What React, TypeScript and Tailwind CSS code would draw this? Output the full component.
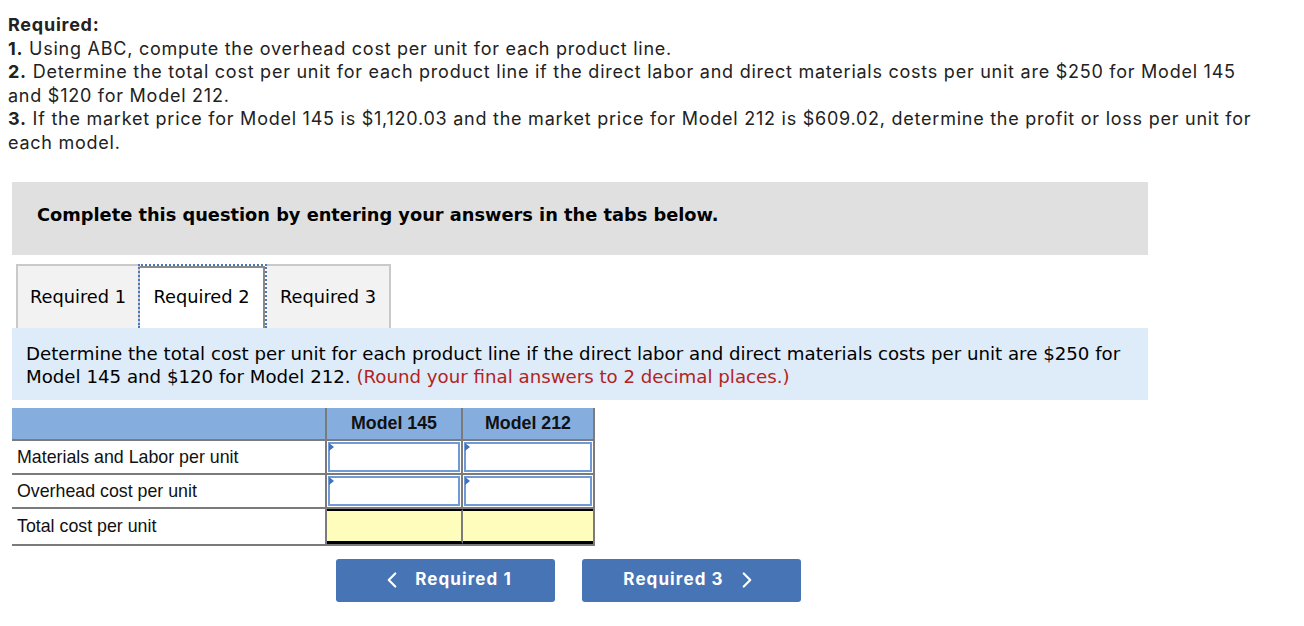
import { ChevronLeft, ChevronRight } from 'lucide-react'

const rows = [
  { label: 'Materials and Labor per unit', kind: 'input' },
  { label: 'Overhead cost per unit', kind: 'input' },
  { label: 'Total cost per unit', kind: 'total' },
]

function InputCell({ last }: { last?: boolean }) {
  return (
    <div className={`relative h-full ${last ? '' : 'border-r-2 border-[#7b7b7b]'} p-[1px]`}>
      <div className="h-full w-full border-2 border-[#6f9ad6] bg-white" />
      <div className="absolute left-[2px] top-[2px] h-0 w-0 border-y-[4px] border-l-[5px] border-y-transparent border-l-[#3f72bf]" />
    </div>
  )
}

function TotalCell({ last }: { last?: boolean }) {
  return (
    <div className={`h-full ${last ? '' : 'border-r-2 border-[#7b7b7b]'} border-b-[3px] border-t-2 border-b-black border-t-black bg-[#fffdbb]`} />
  )
}

export default function App() {
  return (
    <div className="min-h-[626px] w-[1304px] bg-white pb-6 text-[#222]">
      {/* Enunciado */}
      <div className="w-[1262px] pl-2 pt-[13px] font-['Inter',sans-serif] text-[18px] leading-[23.6px] tracking-[0.75px]">
        <p className="font-bold">Required:</p>
        <p>
          <b>1.</b> Using ABC, compute the overhead cost per unit for each product line.
        </p>
        <p>
          <b>2.</b> Determine the total cost per unit for each product line if the direct labor and direct materials costs per unit are $250 for Model 145 and $120 for Model 212.
        </p>
        <p>
          <b>3.</b> If the market price for Model 145 is $1,120.03 and the market price for Model 212 is $609.02, determine the profit or loss per unit for each model.
        </p>
      </div>

      <div className="ml-3 mt-[27px] w-[1136px]">
        {/* Aviso */}
        <div className="h-[73px] bg-[#e0e0e0] px-[25px] pt-[20px] font-['DejaVu_Sans',Verdana,sans-serif] text-[17.8px] font-bold text-black">
          Complete this question by entering your answers in the tabs below.
        </div>

        {/* Pestañas */}
        <div className="ml-1 mt-[9px] flex h-[64px] font-['DejaVu_Sans',Verdana,sans-serif] text-[17.8px] text-black">
          <div className="flex w-[124px] items-center justify-center border-2 border-b-0 border-[#c9c9c9] bg-[#f2f2f2] pt-[2px]">
            Required 1
          </div>
          <div className="-ml-[2px] w-[129px] border-2 border-b-0 border-dotted border-[#4a78b8]">
            <div className="flex h-full items-center justify-center border-r-2 border-t-2 border-[#8a8a8a] bg-white">
              Required 2
            </div>
          </div>
          <div className="flex w-[124px] items-center justify-center border-2 border-b-0 border-l-0 border-[#c9c9c9] bg-[#f2f2f2] pt-[2px]">
            Required 3
          </div>
        </div>

        {/* Instrucciones */}
        <div className="h-[72px] bg-[#deebf8] px-[14px] pt-[14px] font-['DejaVu_Sans',Verdana,sans-serif] text-[18.2px] leading-[23px] text-black">
          Determine the total cost per unit for each product line if the direct labor and direct materials costs per unit are $250 for Model 145 and $120 for Model 212.{' '}
          <span className="text-[#b3231f]">(Round your final answers to 2 decimal places.)</span>
        </div>

        {/* Tabla */}
        <div className="mt-2 w-[583px] font-['Liberation_Sans',Arial,sans-serif] text-[17.8px] text-[#111]">
          <div className="grid h-[33px] grid-cols-[315px_136px_132px] border-b-2 border-[#7b7b7b] bg-[#85aede] font-bold">
            <div className="border-r-2 border-[#7b7b7b]" />
            <div className="flex items-center justify-center border-r-2 border-[#7b7b7b]">Model 145</div>
            <div className="flex items-center justify-center border-r-2 border-[#7b7b7b]">Model 212</div>
          </div>
          {rows.map((r, i) => (
            <div
              key={r.label}
              className={`grid grid-cols-[315px_136px_132px] ${i === 2 ? 'h-[37px]' : 'h-[34px]'} border-b-2 border-[#7b7b7b]`}
            >
              <div className={`flex items-center border-r-2 border-[#7b7b7b] pl-[5px] ${i === 2 ? 'pt-[1px]' : 'pt-[2px]'}`}>
                {r.label}
              </div>
              {r.kind === 'input' ? (
                <>
                  <InputCell />
                  <div className="border-r-2 border-[#7b7b7b]">
                    <InputCell last />
                  </div>
                </>
              ) : (
                <>
                  <TotalCell />
                  <div className="border-r-2 border-[#7b7b7b]">
                    <TotalCell last />
                  </div>
                </>
              )}
            </div>
          ))}
        </div>
      </div>

      {/* Navegación */}
      <div className="ml-[336px] mt-[13px] flex gap-[27px] font-['Inter',sans-serif] text-[17px] font-bold tracking-[1.1px] text-white">
        <button className="flex h-[43px] w-[219px] items-center justify-center gap-[10px] rounded-[3px] bg-[#4774b5]">
          <ChevronLeft size={26} strokeWidth={2} />
          <span>Required 1</span>
        </button>
        <button className="flex h-[43px] w-[219px] items-center justify-center gap-[10px] rounded-[3px] bg-[#4774b5]">
          <span>Required 3</span>
          <ChevronRight size={26} strokeWidth={2} />
        </button>
      </div>
    </div>
  )
}
